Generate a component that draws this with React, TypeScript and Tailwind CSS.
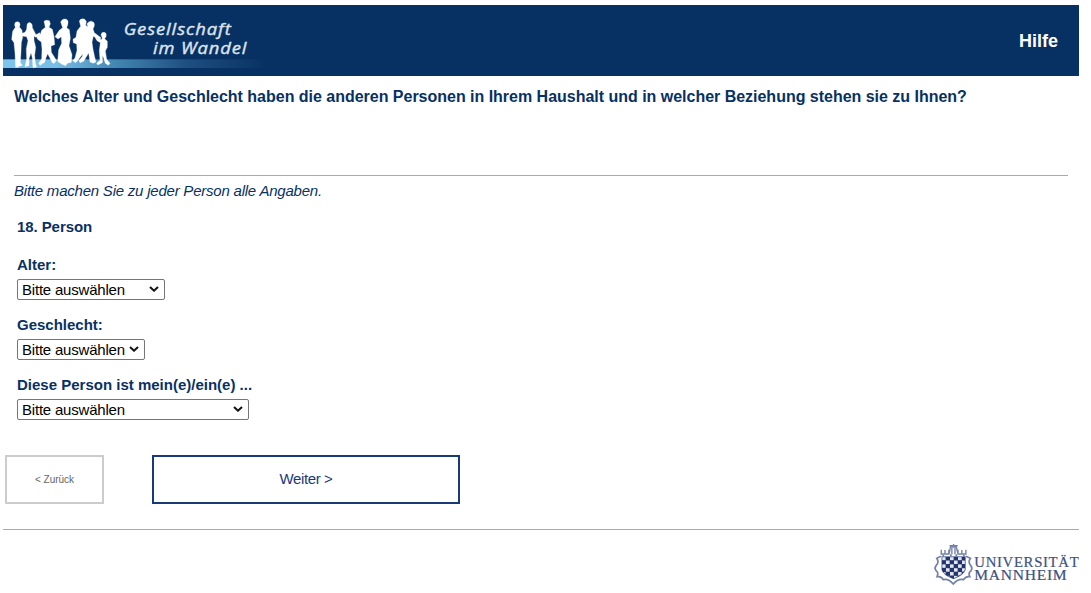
import React from "react";

function PeopleLogo() {
  return (
    <svg className="block h-[71px] w-[280px]" viewBox="9 15 840 213" aria-label="Gesellschaft im Wandel">
      <defs>
        <linearGradient id="stripe" x1="0" x2="1" y1="0" y2="0">
          <stop offset="0" stopColor="#7cc4ec" />
          <stop offset="0.2" stopColor="#78bfe8" />
          <stop offset="0.42" stopColor="#4488b4" />
          <stop offset="0.7" stopColor="#1d4f80" />
          <stop offset="1" stopColor="#083163" />
        </linearGradient>
      </defs>
      <rect x="9" y="178" width="790" height="26" fill="url(#stripe)" />
      <g fill="#fff" stroke="#fff" strokeWidth="1" strokeLinejoin="round">
        <ellipse cx="52" cy="74" rx="8" ry="9" />
        <path d="M46 82 L59 82 L66 91 L68 112 L64 128 L63 155 L61 188 L67 196 L56 199 L55 202 L47 202 L45 160 L42 128 L35 118 L38 94Z" />
        <path d="M81 75 Q83 66 91 68 Q98 71 97 83 L101 91 L108 104 L119 98 L121 105 L107 112 L102 108 L102 121 L107 142 L104 166 L106 190 L110 201 L99 203 L97 174 L93 158 L87 176 L87 197 L75 200 L80 177 L79 146 L84 122 L80 110 L67 108 L63 101 L75 97 L80 88Z" />
        <path d="M132 64 Q137 58 148 62 L151 71 L147 82 L157 88 L162 110 L164 134 L153 138 L154 157 L169 181 L163 190 L157 188 L143 161 L138 173 L134 187 L120 196 L116 190 L125 177 L126 147 L124 126 L113 118 L109 108 L120 106 L125 91 L136 82Z" />
        <path d="M182 66 Q187 54 199 58 Q207 61 203 75 L200 83 L208 89 L211 115 L207 137 L216 164 L214 187 L202 190 L197 197 L186 193 L173 184 L176 149 L185 130 L184 110 L174 117 L165 110 L178 91 L188 83Z" />
        <path d="M238 63 Q241 54 253 57 L259 64 L257 76 L264 81 L270 101 L265 122 L260 145 L248 162 L232 183 L227 188 L218 182 L225 174 L231 151 L230 132 L220 128 L219 118 L228 112 L231 93 L242 79Z" />
        <path d="M261 71 Q269 59 280 66 Q287 73 279 87 L283 98 L303 113 L300 120 L280 109 L276 127 L279 148 L284 171 L288 186 L280 190 L270 186 L266 159 L251 184 L240 188 L237 182 L247 169 L252 136 L245 119 L250 91 L264 84Z" />
        <path d="M303 104 Q305 95 313 97 Q321 99 318 110 L314 116 L322 124 L322 142 L316 153 L320 178 L330 190 L325 196 L316 190 L308 166 L307 188 L293 195 L290 189 L300 181 L298 151 L301 128 L291 122 L285 112 L303 119 L307 115Z" />
      </g>
      <g fill="#dce4ef" stroke="#dce4ef" strokeWidth="1.2" fontFamily="'Open Sans', 'Noto Sans', sans-serif" fontStyle="italic" fontSize="51" fontWeight="500" letterSpacing="2.5">
        <text x="371" y="106" textLength="324" lengthAdjust="spacingAndGlyphs">Gesellschaft</text>
        <text x="459" y="161" textLength="283" lengthAdjust="spacingAndGlyphs">im Wandel</text>
      </g>
    </svg>
  );
}

function UniversityLogo() {
  const checks: [number, number][] = [];
  for (let row = 0; row < 6; row++)
    for (let col = 0; col < 6; col++)
      if ((row + col) % 2 === 1) checks.push([col, row]);
  return (
    <svg className="block h-[48px] w-[147px]" viewBox="0 0 441 144" aria-label="Universität Mannheim">
      <clipPath id="shield">
        <path d="M25 47H93V86Q88 102 59 113Q29 102 25 86Z" />
      </clipPath>
      <g transform="translate(4 0) scale(1.03 1)">
        <g fill="none" stroke="#7482a8" strokeWidth="5">
          <path d="M22 46L10 52Q18 64 8 74Q2 81 8 89Q16 94 11 107Q24 105 29 116Q44 112 58 129Q72 112 88 116Q94 105 106 107Q101 94 110 89Q115 81 109 74Q100 64 108 52L95 46" />
          <path d="M23 26V39H45V26M34 27V38M72 26V39H95V26M83 27V38M46 39L50 18H67L72 39M54 21V40M63 21V40M47 14H71M59 9V18" strokeWidth="4" />
          <path d="M29 41V47M89 41V47M51 40V47M67 40V47" strokeWidth="5" />
        </g>
        <path d="M25 47H93V86Q88 102 59 113Q29 102 25 86Z" fill="#e3e6ee" stroke="#6b79a2" strokeWidth="3" />
        <g clipPath="url(#shield)" fill="#23346d">
          {checks.map(([c, r]) => (
            <rect key={`${c}-${r}`} x={24 + c * 11.7} y={46 + r * 11.5} width="12.8" height="12.6" />
          ))}
        </g>
      </g>
      <g fill="#40517f" fontFamily="'Liberation Serif', serif" fontSize="44" stroke="#40517f" strokeWidth="0.6" letterSpacing="2">
        <text x="127" y="79" textLength="315" lengthAdjust="spacingAndGlyphs">UNIVERSITÄT</text>
        <text x="127" y="117" textLength="279" lengthAdjust="spacingAndGlyphs">MANNHEIM</text>
      </g>
    </svg>
  );
}

function SelectField({ label, width }: { label: string; width: string }) {
  return (
    <label className="block h-[60px]">
      <span className="block h-6 text-[15px] leading-[20px] font-bold whitespace-nowrap">{label}</span>
      <span className={`grid h-[21px] items-center rounded-[2px] border border-[#767676] bg-white ${width}`}>
        <select className="col-start-1 row-start-1 h-[19px] w-full appearance-none pl-1 text-[15px] leading-[19px] tracking-[-0.2px] text-black">
          <option>Bitte auswählen</option>
        </select>
        <svg className="pointer-events-none col-start-1 row-start-1 mr-[5px] mb-px h-[6px] w-[10px] justify-self-end" viewBox="0 0 10 6" fill="none" stroke="#111" strokeWidth="2">
          <path d="M1 1L5 4.7L9 1" />
        </svg>
      </span>
    </label>
  );
}

export default function App() {
  return (
    <div className="h-[593px] overflow-hidden bg-white pt-[5px] pr-3 pl-[3px] font-['Liberation_Sans',Arial,sans-serif] text-[#083163]">
      <header className="flex h-[71px] items-center justify-between bg-[#083163] pr-[21px]">
        <PeopleLogo />
        <a className="pt-0.5 text-[18px] font-bold text-white">Hilfe</a>
      </header>
      <main>
        <section className="mr-[11px] ml-[11px] h-[100px] border-b border-[#aaa] pt-[11px]">
          <h1 className="text-[16px] leading-5 font-bold tracking-[-0.017px] whitespace-nowrap">
            Welches Alter und Geschlecht haben die anderen Personen in Ihrem Haushalt und in welcher Beziehung stehen sie zu Ihnen?
          </h1>
        </section>
        <p className="mt-[5px] ml-[11px] text-[15px] leading-5 tracking-[-0.22px] italic">Bitte machen Sie zu jeder Person alle Angaben.</p>
        <form className="mt-4 ml-[14px]">
          <h2 className="mb-[18px] text-[15px] leading-5 font-bold tracking-[-0.08px]">18. Person</h2>
          <SelectField label="Alter:" width="w-[148px]" />
          <SelectField label="Geschlecht:" width="w-[128px]" />
          <SelectField label="Diese Person ist mein(e)/ein(e) ..." width="w-[232px]" />
        </form>
        <div className="mt-5 ml-[2px] flex gap-12">
          <button className="h-[49px] w-[99px] border-2 border-[#ccc] text-[10px] text-[#666]">&lt; Zurück</button>
          <button className="h-[49px] w-[308px] border-2 border-[#183a78] text-[15px] tracking-[-0.4px] text-[#183a78]">Weiter &gt;</button>
        </div>
      </main>
      <footer className="mt-[25px] flex justify-end border-t border-[#aaa] pt-[11px]">
        <UniversityLogo />
      </footer>
    </div>
  );
}
